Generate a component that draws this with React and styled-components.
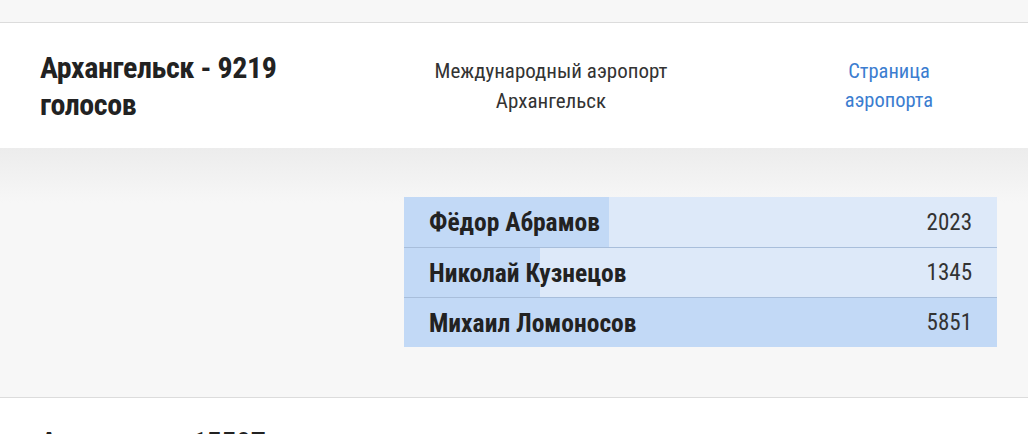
import React from 'react';
import styled, { createGlobalStyle } from 'styled-components';

const GlobalStyle = createGlobalStyle`
  html, body {
    margin: 0;
    padding: 0;
    background: #f7f7f7;
    font-family: Roboto, "DejaVu Sans Condensed", sans-serif;
    font-stretch: 75%;
    color: #222;
  }
`;

const Page = styled.div`
  padding-top: 22px;
  background: #f7f7f7;
`;

const Header = styled.div`
  display: grid;
  grid-template-columns: 272px 1fr 198px;
  align-items: center;
  padding: 26px 40px 25px;
  background: #fff;
  border-top: 1px solid #dcdcdc;
`;

const CityTitle = styled.h2`
  margin: 0;
  font-size: 30px;
  line-height: 37px;
  letter-spacing: -0.4px;
  font-weight: 700;
  color: #222;
`;

const Airport = styled.div`
  text-align: center;
  font-size: 21px;
  line-height: 30px;
  color: #333;
`;

const AirportLink = styled.a`
  text-align: center;
  font-size: 20.5px;
  line-height: 29px;
  color: #3b7dd0;
  text-decoration: none;
`;

const Results = styled.div`
  display: flex;
  justify-content: flex-end;
  padding: 49px 31px 50px 0;
  background: linear-gradient(to bottom, #ececec 0px, #f7f7f7 55px);
`;

const Table = styled.div`
  width: 593px;
  background: #dde9f9;
`;

const Row = styled.div`
  display: flex;
  align-items: center;
  justify-content: space-between;
  height: 50px;
  box-sizing: border-box;
  padding: 0 25px;
  border-top: 1px solid #a8bedb;

  &:first-child {
    border-top: none;
  }
`;

const Name = styled.span`
  font-size: 25.5px;
  font-weight: 700;
  color: #222;
`;

const Votes = styled.span`
  font-size: 23px;
  color: #333;
`;

const items = [
  {
    city: 'Архангельск',
    total: 9219,
    airport: ['Международный аэропорт', 'Архангельск'],
    candidates: [
      { name: 'Фёдор Абрамов', votes: 2023 },
      { name: 'Николай Кузнецов', votes: 1345 },
      { name: 'Михаил Ломоносов', votes: 5851 },
    ],
  },
  {
    city: 'Астрахань',
    total: 15597,
    airport: ['Международный аэропорт', 'Астрахань'],
    candidates: [],
  },
];

const Item = ({ item }) => {
  const max = Math.max(...item.candidates.map((c) => c.votes), 1);
  return (
    <>
      <Header>
        <CityTitle>
          {item.city} - {item.total} голосов
        </CityTitle>
        <Airport>
          {item.airport[0]}
          <br />
          {item.airport[1]}
        </Airport>
        <AirportLink href="#">
          Страница
          <br />
          аэропорта
        </AirportLink>
      </Header>
      {item.candidates.length > 0 && (
        <Results>
          <Table>
            {item.candidates.map((c) => {
              const pct = (c.votes / max) * 100;
              return (
                <Row
                  key={c.name}
                  style={{
                    background: `linear-gradient(to right, #c2d9f6 ${pct}%, transparent ${pct}%)`,
                  }}
                >
                  <Name>{c.name}</Name>
                  <Votes>{c.votes}</Votes>
                </Row>
              );
            })}
          </Table>
        </Results>
      )}
    </>
  );
};

export default function App() {
  return (
    <Page>
      <GlobalStyle />
      {items.map((item) => (
        <Item key={item.city} item={item} />
      ))}
    </Page>
  );
}
